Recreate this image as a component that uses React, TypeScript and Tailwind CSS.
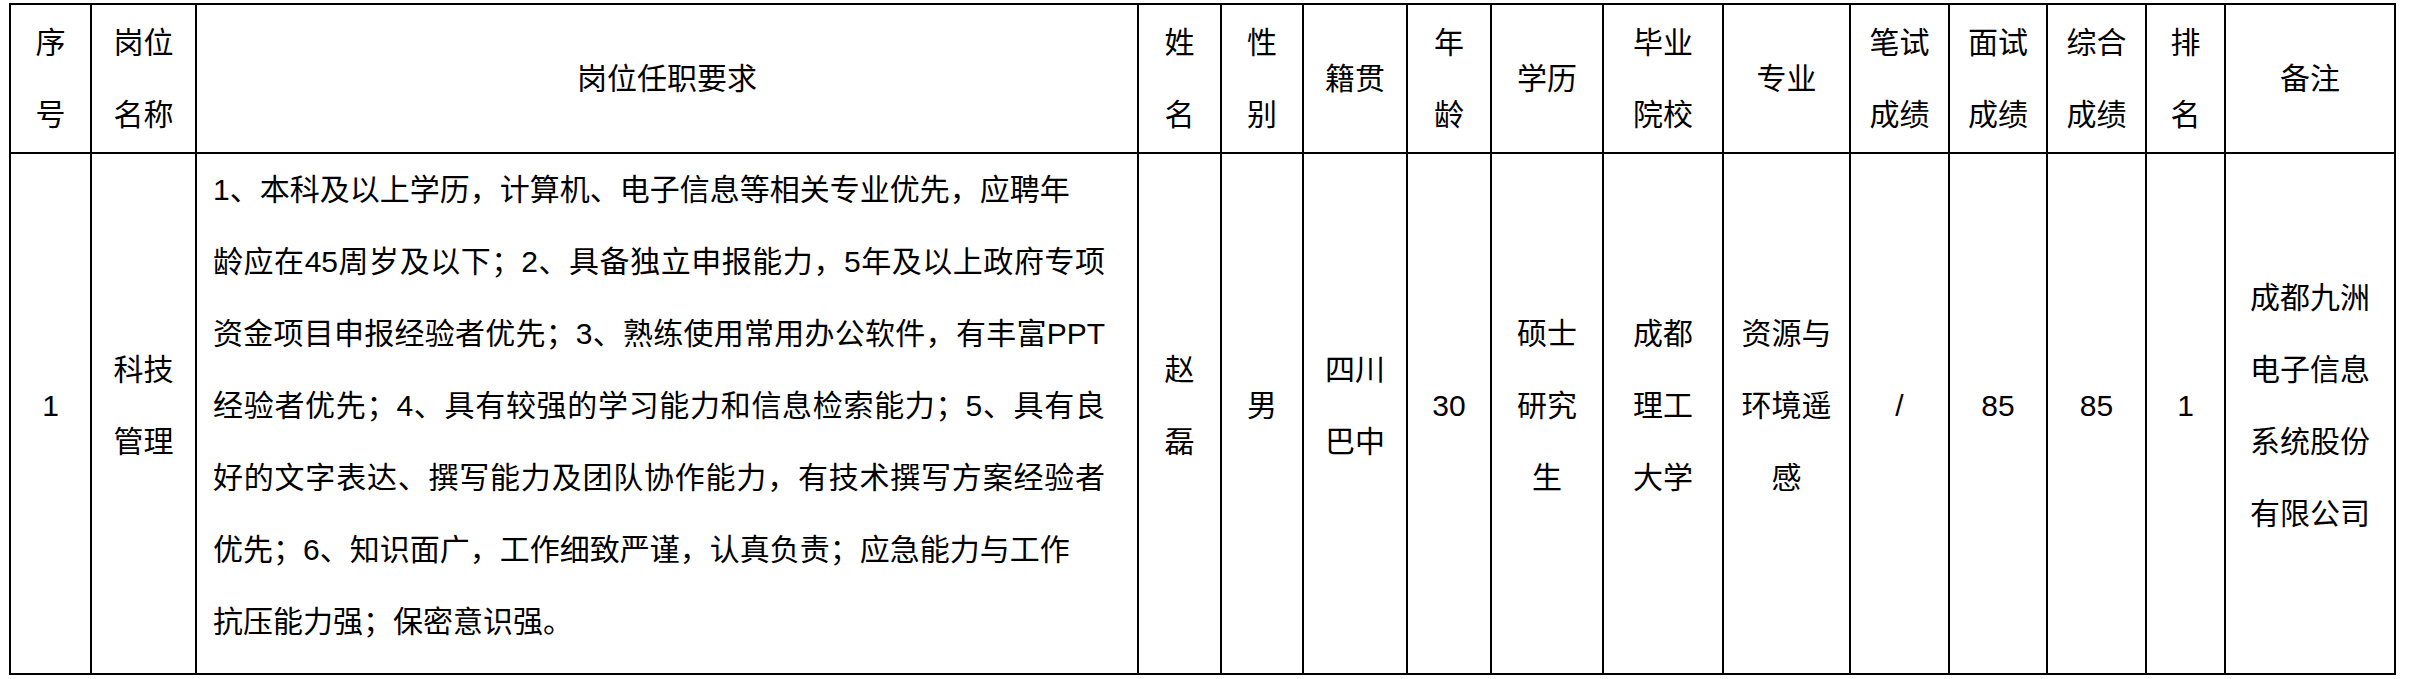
import React from 'react';

const widths = [81, 105, 942, 83, 82, 104, 84, 112, 120, 127, 99, 98, 99, 79, 170];

const headers: string[][] = [
  ['序', '号'],
  ['岗位', '名称'],
  ['岗位任职要求'],
  ['姓', '名'],
  ['性', '别'],
  ['籍贯'],
  ['年', '龄'],
  ['学历'],
  ['毕业', '院校'],
  ['专业'],
  ['笔试', '成绩'],
  ['面试', '成绩'],
  ['综合', '成绩'],
  ['排', '名'],
  ['备注'],
];

// each line as it breaks in the original document; `full` lines are stretched edge to edge
const requirement: { text: string; full: boolean }[] = [
  { text: '1、本科及以上学历，计算机、电子信息等相关专业优先，应聘年', full: false },
  { text: '龄应在45周岁及以下；2、具备独立申报能力，5年及以上政府专项', full: true },
  { text: '资金项目申报经验者优先；3、熟练使用常用办公软件，有丰富PPT', full: true },
  { text: '经验者优先；4、具有较强的学习能力和信息检索能力；5、具有良', full: true },
  { text: '好的文字表达、撰写能力及团队协作能力，有技术撰写方案经验者', full: true },
  { text: '优先；6、知识面广，工作细致严谨，认真负责；应急能力与工作', full: false },
  { text: '抗压能力强；保密意识强。', full: false },
];

const row: string[][] = [
  ['1'],
  ['科技', '管理'],
  [],
  ['赵', '磊'],
  ['男'],
  ['四川', '巴中'],
  ['30'],
  ['硕士', '研究', '生'],
  ['成都', '理工', '大学'],
  ['资源与', '环境遥', '感'],
  ['/'],
  ['85'],
  ['85'],
  ['1'],
  ['成都九洲', '电子信息', '系统股份', '有限公司'],
];

const Lines = ({ lines }: { lines: string[] }) => (
  <>
    {lines.map((l, i) => (
      <div key={i}>{l}</div>
    ))}
  </>
);

export default function App() {
  return (
    <div className="bg-white w-[2411px] h-[679px] pt-[3px] pl-[9px] text-black font-['Liberation_Sans','Noto_Sans_CJK_SC',sans-serif] text-[30px] leading-[72px]">
      <table className="border-collapse table-fixed w-[2387px]">
        <colgroup>
          {widths.map((w, i) => (
            <col key={i} style={{ width: w }} />
          ))}
        </colgroup>
        <tbody>
          <tr className="h-[149px]">
            {headers.map((h, i) => (
              <td key={i} className="border-2 border-black p-0 text-center align-middle">
                <Lines lines={h} />
              </td>
            ))}
          </tr>
          <tr className="h-[519px]">
            {row.map((c, i) =>
              i === 2 ? (
                <td key={i} className="border-2 border-black pl-[16px] pr-[32px] pt-0 pb-[15px] align-middle">
                  {requirement.map((l, j) => (
                    <div
                      key={j}
                      className={
                        l.full
                          ? 'whitespace-nowrap text-justify [text-align-last:justify]'
                          : 'whitespace-nowrap'
                      }
                    >
                      {l.text}
                    </div>
                  ))}
                </td>
              ) : (
                <td key={i} className="border-2 border-black px-0 pt-0 pb-[15px] text-center align-middle">
                  <Lines lines={c} />
                </td>
              ),
            )}
          </tr>
        </tbody>
      </table>
    </div>
  );
}
